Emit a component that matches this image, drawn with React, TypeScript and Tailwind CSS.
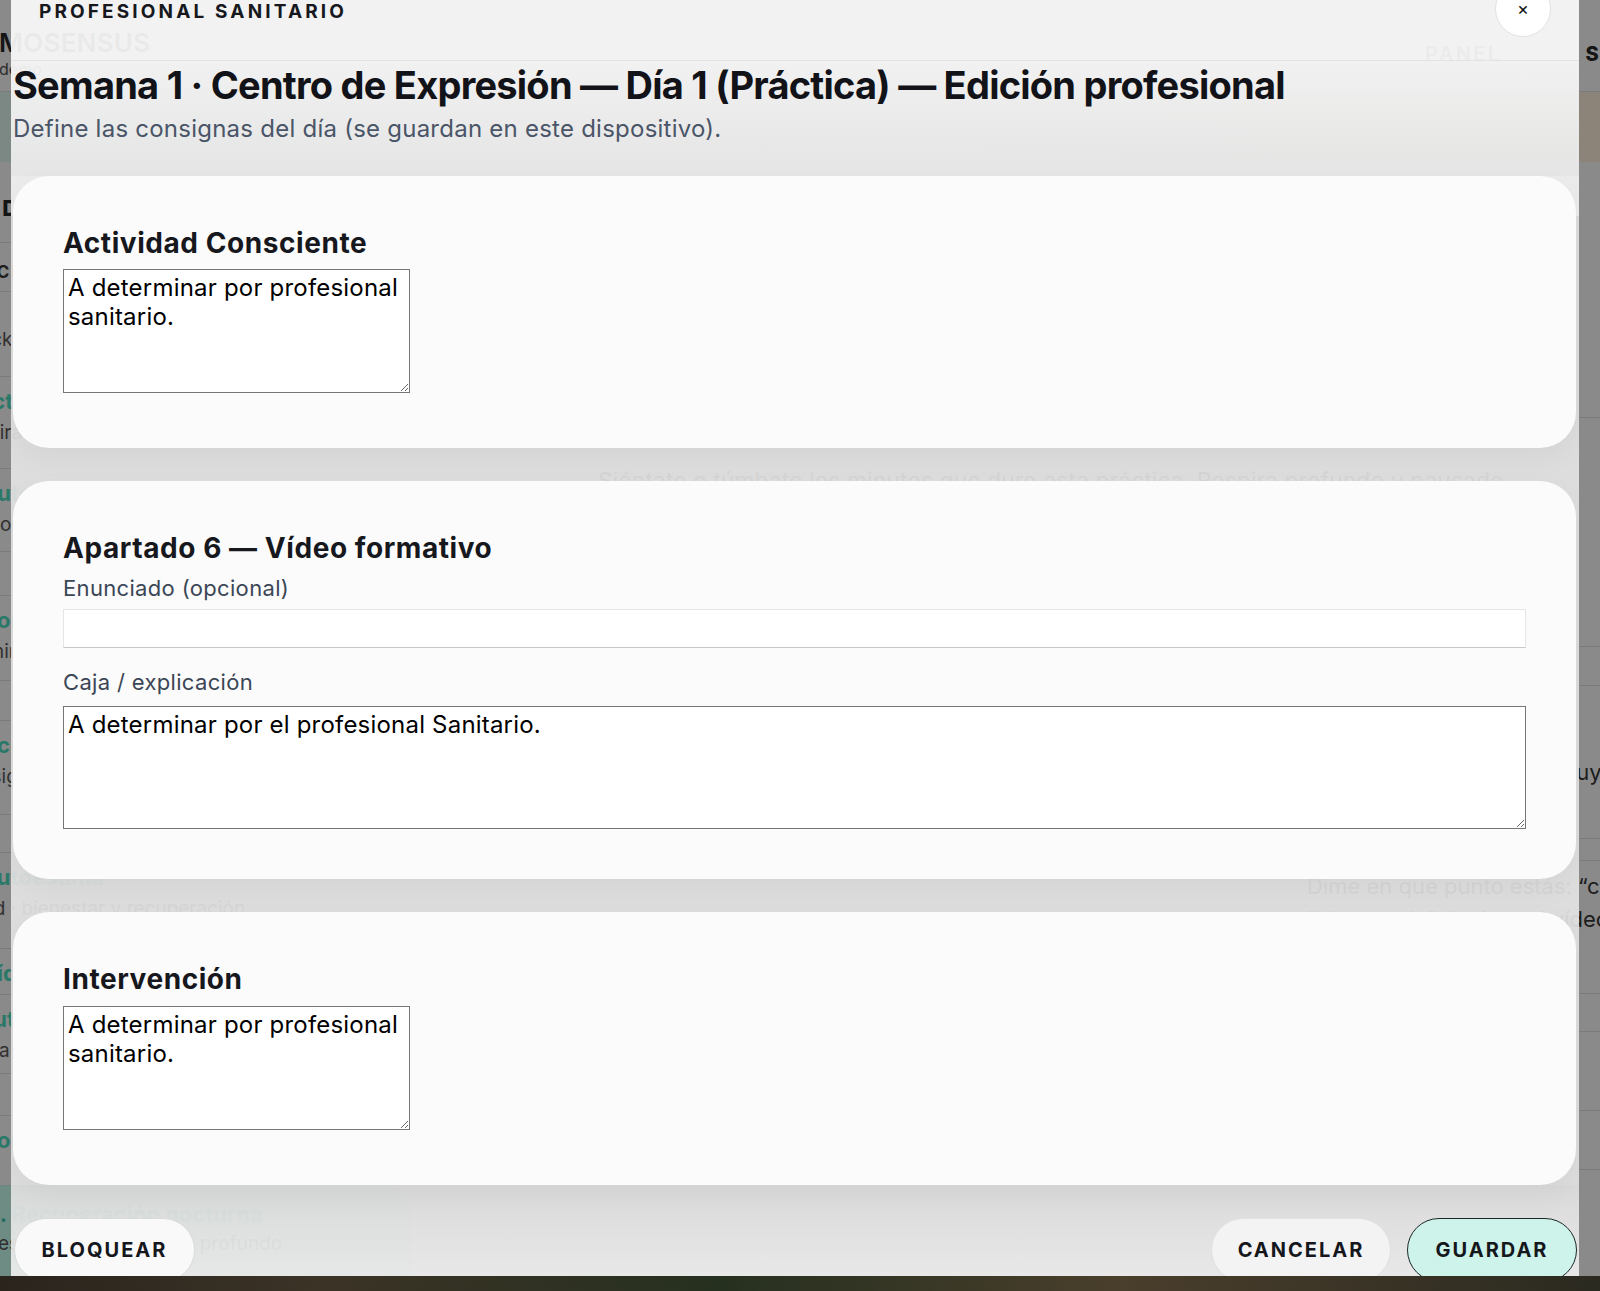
import React from "react";

type Row = { h: number; title?: string; sub?: string; kind?: "caps" | "plain" };

const rows: Row[] = [
  { h: 49, title: "CHECK-IN", kind: "caps" },
  { h: 85, sub: "Check-in: pre — post sesión", kind: "plain" },
  { h: 92, title: "1. Actívate", sub: "Respiración + foco · Centro de Expresión" },
  { h: 83, title: "2. Autocuidado", sub: "Ayuno · energía · concentración" },
  { h: 44 },
  { h: 85, title: "3. Comunicación", sub: "Dormir de forma reparadora" },
  { h: 40 },
  { h: 94, title: "4. Acción", sub: "Consigna del día" },
  { h: 38 },
  { h: 96, title: "5. Autoestima", sub: "Salud · bienestar y recuperación" },
  { h: 46, title: "6. Vídeo formativo" },
  { h: 79, title: "7. Autorregulación", sub: "Pausa · descanso activo" },
  { h: 42 },
  { h: 62, title: "8. Conversación" },
];

function Page() {
  return (
    <div className="flex h-[1291px] w-[1600px] flex-col">
      <header className="flex h-[92px] shrink-0 border-b border-[#7b7b7b]">
        <div className="ml-[-1px] w-[1426px] shrink-0 pt-[31px]">
          <div className="text-[26px] font-semibold leading-[24px] tracking-[0.01em] text-[#151515]">MOSENSUS</div>
          <div className="mt-[6px] text-[16px] leading-[16px] text-[#2b2b2b]">demo</div>
        </div>
        <nav className="flex shrink-0 gap-[84px] pt-[42px] text-[20px] font-semibold leading-[24px] tracking-[0.12em]">
          <span className="text-[#2a2a2a]">PANEL</span>
          <span className="font-extrabold text-[#151515]">SESIÓN</span>
        </nav>
      </header>
      <div className="h-[70px] shrink-0 bg-gradient-to-r from-[#7c8883] via-[#868684] to-[#8c8479]" />
      <div className="flex min-h-0 flex-1">
        <aside className="ml-[-85px] flex w-[496px] shrink-0 flex-col">
          <div className="mt-[33px] text-[22px] font-extrabold leading-[26px] tracking-[0.08em] text-[#151515]">ACTIVIDADES (9)</div>
          <div className="mt-[21px] flex flex-col">
            {rows.map((r, i) => (
              <div key={i} style={{ height: r.h }} className="shrink-0 border-t border-[#7a7a7a] pl-[40px] pt-[10px]">
                {r.kind === "caps" && (
                  <div className="pt-[8px] text-[17px] font-bold leading-[22px] tracking-[0.12em] text-[#1c1c1c]">{r.title}</div>
                )}
                {r.kind === "plain" && (
                  <div className="pt-[26px] text-[19px] leading-[24px] text-[#2f2f2f]">{r.sub}</div>
                )}
                {!r.kind && r.title && (
                  <div className="text-[22px] font-bold leading-[28px] text-[#2a7868]">{r.title}</div>
                )}
                {!r.kind && r.sub && (
                  <div className="mt-[6px] text-[19px] leading-[24px] text-[#303030]">{r.sub}</div>
                )}
              </div>
            ))}
          </div>
          <div className="mt-[8px] h-[120px] shrink-0 rounded-[28px] border border-[#6f8680] bg-[#6f8c84] pl-[70px] pt-[14px]">
            <div className="text-[22px] font-bold leading-[28px] text-[#1f6f5f]">9. Recuperación nocturna</div>
            <div className="mt-[4px] text-[19px] leading-[24px] text-[#2f2f2f]">Respiración · descanso profundo</div>
          </div>
        </aside>
        <main className="flex min-w-0 flex-1 flex-col">
          <div className="h-[256px] shrink-0 border-b border-[#7a7a7a] pl-[135px] pt-[48px]">
            <div className="w-[920px] text-[48px] font-bold leading-[56px] tracking-[-0.02em] text-[#161616]">
              Semana 1 · Centro de Expresión — Día 1 (Práctica)
            </div>
            <div className="mt-[30px] text-[22px] leading-[28px] text-[#333333]">Actividad 9 de 9 — Respiración · descanso profundo</div>
          </div>
          <div className="h-[229px] shrink-0 border-b border-[#7a7a7a] pl-[187px] pt-[42px] text-[23px] leading-[43px] text-[#1e1e1e]">
            <div className="whitespace-nowrap">Siéntate o túmbate los minutos que dure esta práctica. Respira profundo y pausado.</div>
            <div className="whitespace-nowrap">Lleva la atención a tu Centro de Expresión, justo debajo de la nuez. Siéntelo. Observa sin</div>
            <div className="whitespace-nowrap">juicio y, si te pierdes en tus pensamientos, toma conciencia y vuelve a tu respiración.</div>
          </div>
          <div className="mr-[-14px] mt-[38px] h-[154px] shrink-0 border-y border-[#7a7a7a] pt-[72px] text-right text-[22px] leading-[28px] text-[#1c1c1c]">
            Si no puedes hacerla ahora, esta lectura la sustituye
          </div>
          <div className="mt-[21px] h-[134px] shrink-0 border-y border-[#7a7a7a] pl-[896px] pt-[9px] text-[22px] leading-[33px] text-[#1c1c1c]">
            <div className="whitespace-nowrap">Dime en qué punto estás: “cansado”, “ansioso”,</div>
            <div className="whitespace-nowrap">“bloqueado”, “quiero el vídeo” o “quiero hacer</div>
            <div className="whitespace-nowrap">la práctica”.</div>
          </div>
          <div className="mt-[37px] h-[80px] shrink-0 border-y border-[#7a7a7a]" />
          <div className="mt-[58px] h-[100px] shrink-0 border-t border-[#7a7a7a]" />
        </main>
      </div>
      <div className="h-[15px] shrink-0 bg-[linear-gradient(90deg,#2a241d,#3b3326_20%,#26301f_45%,#4a3e2c_70%,#2b2a20)]" />
    </div>
  );
}

function Card({ children }: { children: React.ReactNode }) {
  return (
    <section className="relative z-[1] rounded-[36px] bg-[#fbfbfb] p-[50px] shadow-[0_10px_30px_rgba(0,0,0,0.04)]">
      {children}
    </section>
  );
}

const cardTitle = "text-[28px] font-bold leading-[34px] tracking-[0.02em] text-[#16181d]";
const fieldLabel = "block text-[22px] leading-[27px] tracking-[0.015em] text-[#3b4656]";
const areaCls =
  "block resize-y border border-[#767676] bg-white px-[4px] pt-[3px] text-[24px] leading-[29px] tracking-[0.2px] text-black outline-none";
const pill =
  "flex h-[64px] shrink-0 items-center justify-center rounded-full text-[20px] font-bold leading-[24px] tracking-[0.1em] text-[#15171c]";

function Modal() {
  return (
    <div className="absolute left-[11px] top-[-20px] flex h-[1296px] w-[1568px] flex-col overflow-hidden">
      <div className="flex shrink-0 items-start justify-between border-b border-[#e3e3e3] bg-[rgba(250,250,250,0.93)] px-[28px] pb-[23px] pt-[1px]">
        <div className="mt-[20px] text-[19px] font-bold leading-[22px] tracking-[0.165em] text-[#16181d]">PROFESIONAL SANITARIO</div>
        <button className="flex h-[56px] w-[56px] items-center justify-center rounded-full border border-[#e2e2e2] bg-white text-[18px] leading-none text-[#111]">
          ×
        </button>
      </div>
      <div className="relative mb-[-40px] shrink-0 bg-[linear-gradient(180deg,rgba(249,249,249,0.93),rgba(236,236,236,0.93)_74%)] px-[2px] pb-[73px] pt-[1px]">
        <h1 className="whitespace-nowrap text-[38px] font-bold leading-[46px] tracking-[-0.02em] text-[#121318]">
          Semana 1 · Centro de Expresión — Día 1 (Práctica) — Edición profesional
        </h1>
        <p className="mt-[7px] text-[24px] leading-[28px] tracking-[0.01em] text-[#4a5568]">Define las consignas del día (se guardan en este dispositivo).</p>
      </div>
      <div className="flex shrink-0 flex-col gap-[33px] bg-[rgba(228,228,228,0.92)] pl-[2px] pr-[3px]">
        <Card>
          <h2 className={cardTitle}>Actividad Consciente</h2>
          <textarea className={`${areaCls} mb-[5px] mt-[9px] h-[124px] w-[347px]`} defaultValue="A determinar por profesional sanitario." />
        </Card>
        <Card>
          <h2 className={cardTitle}>Apartado 6 — Vídeo formativo</h2>
          <label className={`${fieldLabel} mt-[10px]`}>Enunciado (opcional)</label>
          <input className="mt-[7px] block h-[39px] w-full border border-[#e6e6e6] border-b-[#c8c8c8] bg-white px-[4px] text-[24px] outline-none" />
          <label className={`${fieldLabel} mt-[21px]`}>Caja / explicación</label>
          <textarea className={`${areaCls} mt-[10px] h-[123px] w-full`} defaultValue="A determinar por el profesional Sanitario." />
        </Card>
        <Card>
          <h2 className={cardTitle}>Intervención</h2>
          <textarea className={`${areaCls} mb-[5px] mt-[10px] h-[124px] w-[347px]`} defaultValue="A determinar por profesional sanitario." />
        </Card>
      </div>
      <div className="flex flex-1 items-start justify-between bg-[linear-gradient(180deg,rgba(224,224,224,0.92),rgba(241,241,241,0.92))] pl-[3px] pr-[2px] pt-[33px]">
        <button className={`${pill} w-[181px] border border-[#dadada] bg-[rgba(250,250,250,0.96)]`}>BLOQUEAR</button>
        <div className="flex gap-[16px]">
          <button className={`${pill} w-[180px] border border-[#e0e0e0] bg-[#f3f3f3]`}>CANCELAR</button>
          <button className={`${pill} w-[170px] border-[1.5px] border-[#1d2727] bg-[#cdf3ea]`}>GUARDAR</button>
        </div>
      </div>
    </div>
  );
}

export default function App() {
  return (
    <div className="relative h-[1291px] w-full overflow-hidden bg-[#8a8a8a] font-['Inter',sans-serif]">
      <Page />
      <Modal />
    </div>
  );
}
